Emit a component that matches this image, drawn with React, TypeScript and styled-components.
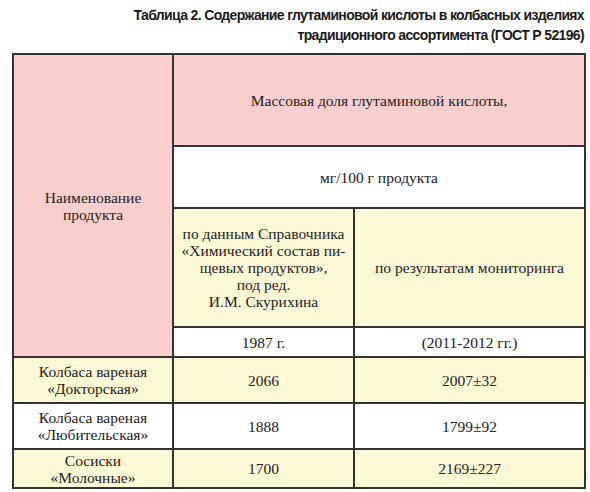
import React from "react";
import styled, { createGlobalStyle } from "styled-components";

const Global = createGlobalStyle`
  html, body { margin: 0; padding: 0; background: #fff; }
`;

const Page = styled.div`
  width: 590px;
  padding: 5px 6px 0 12px;
  box-sizing: border-box;
`;

const Title = styled.div`
  font-family: "Liberation Sans", Arial, sans-serif;
  font-weight: bold;
  font-size: 14px;
  letter-spacing: -0.65px;
  line-height: 20px;
  color: #1a1a1a;
  text-align: right;
  margin-bottom: 8px;
`;

const Table = styled.table`
  border-collapse: collapse;
  width: 572px;
  table-layout: fixed;
  font-family: "Liberation Serif", "Times New Roman", serif;
  font-size: 15.5px;
  color: #222;
  border: 2px solid #333;
`;

type Tone = "pink" | "yellow" | "white";
const bg: Record<Tone, string> = {
  pink: "#FCCFCF",
  yellow: "#FFF8D6",
  white: "#FFFFFF",
};

const Cell = styled.td<{ $tone: Tone; $h?: number }>`
  background: ${(p) => bg[p.$tone]};
  border: 2px solid #333;
  text-align: center;
  vertical-align: middle;
  line-height: 17px;
  padding: 0 2px;
  height: ${(p) => (p.$h ? `${p.$h}px` : "auto")};
  box-sizing: border-box;
`;

const rows: { name: [string, string]; a: string; b: string; tone: Tone }[] = [
  { name: ["Колбаса вареная", "«Докторская»"], a: "2066", b: "2007±32", tone: "yellow" },
  { name: ["Колбаса вареная", "«Любительская»"], a: "1888", b: "1799±92", tone: "white" },
  { name: ["Сосиски", "«Молочные»"], a: "1700", b: "2169±227", tone: "yellow" },
];

export default function App() {
  return (
    <Page>
      <Global />
      <Title>
        Таблица 2. Содержание глутаминовой кислоты в колбасных изделиях
        <br />
        традиционного ассортимента (ГОСТ Р 52196)
      </Title>
      <Table>
        <colgroup>
          <col style={{ width: 160 }} />
          <col style={{ width: 181 }} />
          <col style={{ width: 231 }} />
        </colgroup>
        <tbody>
          <tr>
            <Cell $tone="pink" rowSpan={4}>
              Наименование
              <br />
              продукта
            </Cell>
            <Cell $tone="pink" colSpan={2} $h={92}>
              Массовая доля глутаминовой кислоты,
            </Cell>
          </tr>
          <tr>
            <Cell $tone="white" colSpan={2} $h={62}>
              мг/100 г продукта
            </Cell>
          </tr>
          <tr>
            <Cell $tone="yellow" $h={119}>
              по данным Справочника
              <br />
              «Химический состав пи-
              <br />
              щевых продуктов»,
              <br />
              под ред.
              <br />
              И.М. Скурихина
            </Cell>
            <Cell $tone="yellow">по результатам мониторинга</Cell>
          </tr>
          <tr>
            <Cell $tone="white" $h={30}>
              1987 г.
            </Cell>
            <Cell $tone="white">(2011-2012 гг.)</Cell>
          </tr>
          {rows.map((r, i) => (
            <tr key={i}>
              <Cell $tone={r.tone} $h={i === 2 ? 39 : 46}>
                {r.name[0]}
                <br />
                {r.name[1]}
              </Cell>
              <Cell $tone={r.tone}>{r.a}</Cell>
              <Cell $tone={r.tone}>{r.b}</Cell>
            </tr>
          ))}
        </tbody>
      </Table>
    </Page>
  );
}
